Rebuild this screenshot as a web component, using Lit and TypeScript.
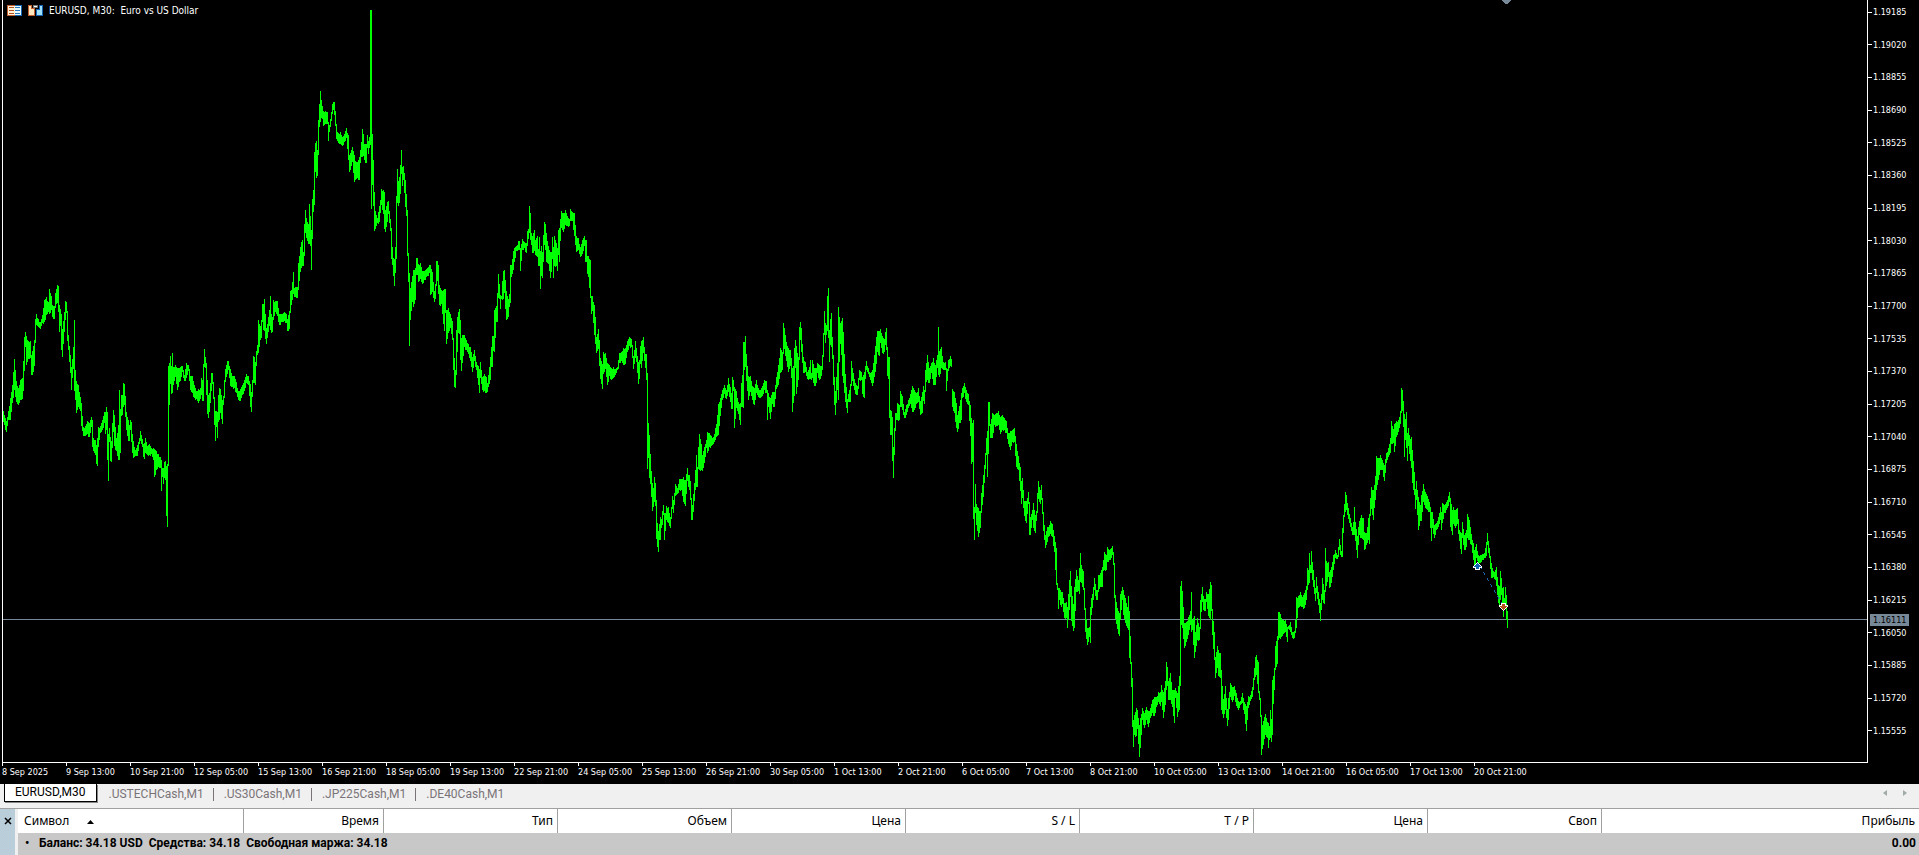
import { LitElement, html, css } from "lit";
import { customElement, state } from "lit/decorators.js";

// Bars of the plot: "x top bottom", one unit per column of the canvas.
const SERIES = `
3 411 422,6 421 432,8 411 420,10 398 420,12 385 403,14 359 390,16 381 402,18 388 405,20 380 400,22 378 399,23 361 391,24 337 371,25 332 347,26 336 365,28 341 359,30 341 358,31 355 375,32 351 375,34 340 366,35 319 343,36 314 325,38 319 327,40 322 329,42 315 323,44 300 322,46 297 315,48 302 312,49 289 314,51 296 310,52 305 317,54 306 319,55 293 305,57 285 303,58 286 312,59 305 332,60 309 326,61 314 350,62 329 357,63 321 344,65 301 320,66 302 313,67 314 341,68 335 350,70 355 373,71 367 390,72 359 378,73 347 369,74 320 391,75 370 400,76 381 413,78 385 407,80 397 411,81 403 426,83 427 436,85 426 436,87 421 434,89 423 437,91 417 427,92 420 447,93 438 451,95 440 455,96 445 464,97 438 466,98 427 447,100 426 433,102 420 430,104 412 423,105 412 434,106 407 430,107 412 460,108 434 481,109 428 442,110 437 461,111 441 462,112 423 448,113 410 432,114 415 446,116 438 451,118 425 460,119 390 460,120 409 453,121 395 416,122 395 415,123 383 407,124 384 405,125 396 417,126 412 430,128 420 441,129 425 441,130 420 430,131 422 442,132 434 453,133 441 458,135 450 456,137 445 456,139 438 444,140 431 441,142 439 447,143 444 457,144 443 459,145 438 453,147 446 455,149 444 455,151 448 454,153 448 460,154 449 477,156 451 470,158 454 467,160 457 468,161 460 491,162 468 477,163 468 484,164 462 478,165 461 480,166 466 516,167 464 527,168 366 465,169 363 405,170 356 384,171 366 394,172 353 393,173 367 385,175 365 377,177 368 390,179 368 382,181 366 377,182 366 372,184 375 381,186 363 378,188 365 371,190 376 390,192 376 393,194 385 398,196 391 399,198 389 403,200 388 399,201 378 395,202 380 401,203 364 401,204 349 367,205 357 368,206 363 395,207 380 414,208 395 418,209 393 412,211 373 391,212 373 384,213 387 399,214 398 425,215 411 441,216 411 427,217 412 438,218 395 422,219 388 420,220 389 413,222 400 424,223 396 405,224 380 397,225 369 380,227 361 374,228 361 370,230 369 386,232 376 387,234 376 388,236 382 393,238 391 400,240 389 401,242 385 395,244 380 391,246 374 383,248 376 385,250 384 407,251 392 412,252 380 397,253 356 383,254 357 383,255 362 385,256 351 366,257 345 355,258 320 353,260 326 340,261 320 338,262 304 319,263 304 330,264 299 331,266 328 344,268 317 332,269 310 326,270 296 330,271 314 333,272 317 332,273 300 320,275 301 312,277 301 316,279 314 325,281 314 322,284 312 321,286 314 323,287 319 331,289 311 329,290 291 310,291 290 305,293 272 294,294 288 297,295 287 297,297 287 298,298 263 290,300 247 272,301 242 268,302 240 266,303 252 266,304 224 256,305 210 233,306 218 238,308 224 244,309 204 244,310 216 246,311 230 270,312 199 239,313 190 212,314 152 205,315 143 172,316 141 178,317 150 176,318 120 155,319 104 127,320 91 122,321 100 118,322 106 119,323 111 126,325 111 124,327 112 124,328 128 141,330 119 123,332 104 114,333 102 110,334 102 115,335 111 126,336 128 139,338 133 143,340 132 144,342 137 146,344 134 142,346 128 138,348 135 160,349 155 172,351 150 166,352 147 162,354 155 182,355 161 180,357 162 178,359 157 180,360 150 163,361 142 157,362 129 157,363 134 156,364 144 160,366 144 163,367 135 148,368 141 154,369 137 148,370 10 145,371 10 209,372 134 185,373 160 206,374 192 231,375 211 229,377 218 223,379 206 222,380 200 213,381 189 205,383 190 214,384 192 229,385 210 232,387 202 222,388 201 214,390 219 231,391 228 259,392 247 265,393 258 276,394 259 286,395 247 273,396 196 259,397 169 203,398 181 206,399 177 203,400 165 194,401 150 174,402 167 186,403 166 180,404 173 193,405 180 207,406 194 216,407 210 256,408 253 282,409 273 346,410 288 320,412 276 302,413 270 307,415 268 300,416 258 275,417 258 275,418 264 282,420 263 279,422 271 284,424 271 280,427 268 276,429 265 273,430 265 295,432 272 292,434 291 302,435 284 299,436 261 286,437 261 281,438 265 294,439 285 305,441 290 304,442 291 314,444 289 331,445 289 313,446 310 344,448 308 333,450 314 328,452 321 340,453 340 370,454 358 387,455 370 388,456 330 375,457 317 352,458 312 333,459 309 334,460 320 360,461 338 371,462 335 363,464 335 347,466 340 350,468 344 354,470 347 361,472 357 372,474 350 361,476 362 370,478 366 385,479 369 393,480 362 378,482 377 390,484 374 391,486 377 393,487 383 392,488 375 387,490 357 380,491 347 367,492 336 367,493 336 351,494 310 352,496 306 322,497 293 322,498 274 298,499 284 299,500 295 309,501 296 299,502 281 300,503 271 299,504 270 293,505 280 309,506 291 320,508 299 317,509 294 307,510 265 303,511 265 277,513 251 270,514 248 262,516 246 251,518 241 250,519 241 250,520 249 271,522 239 250,524 242 248,526 243 253,527 231 246,528 229 239,529 206 233,530 213 240,531 233 245,532 236 253,534 230 251,535 240 255,537 236 257,538 249 266,539 237 266,540 251 289,541 246 276,542 252 278,543 235 262,544 222 245,545 224 250,546 233 262,548 246 264,550 252 278,551 252 272,552 237 259,553 247 278,554 236 266,556 243 266,557 248 271,558 230 255,559 228 262,560 219 241,561 211 228,563 213 232,565 210 225,567 216 226,569 219 226,570 209 221,572 212 221,574 213 236,576 236 252,578 238 250,580 247 257,582 240 254,584 236 246,585 240 262,586 240 262,587 256 274,588 256 277,590 260 298,591 298 314,592 296 311,593 302 323,594 305 335,595 317 344,596 337 353,598 329 349,599 340 366,600 358 379,602 364 389,603 352 374,605 353 369,607 363 385,609 365 376,611 368 380,613 367 378,615 369 375,617 367 370,619 353 363,621 352 361,623 348 365,625 348 364,627 341 352,629 337 346,631 339 347,633 356 369,635 341 358,636 348 362,638 362 384,639 360 379,640 346 364,641 341 368,643 337 353,645 354 368,646 354 380,647 373 469,648 423 458,649 435 478,650 454 484,651 471 497,652 483 511,653 488 507,654 477 502,655 483 506,656 500 539,657 523 547,658 531 552,659 524 540,660 517 540,661 519 528,662 511 525,663 505 515,664 520 540,666 506 520,668 507 523,670 517 528,672 496 506,673 500 513,675 484 496,677 488 494,679 479 490,681 479 490,683 477 502,685 480 506,687 468 481,688 475 487,689 475 490,690 481 500,691 505 520,692 505 520,694 483 501,695 470 490,696 455 487,697 467 487,698 447 469,699 434 470,701 444 470,702 455 471,704 447 463,706 440 448,707 432 453,709 433 447,711 436 446,713 437 444,716 424 437,718 404 435,720 398 416,722 390 400,724 385 394,726 390 399,728 378 392,730 387 402,731 393 409,732 377 409,733 380 391,734 387 428,736 391 408,738 402 414,740 403 425,741 383 407,742 375 407,743 342 408,744 342 370,745 336 367,746 354 381,748 376 400,750 376 392,752 386 400,754 388 405,756 380 393,758 388 397,760 390 398,762 386 396,764 380 390,766 381 393,767 390 420,768 393 407,770 398 419,772 392 404,774 392 407,776 377 389,778 365 385,780 348 373,782 352 370,783 323 350,784 328 349,786 342 361,788 348 372,790 350 366,791 358 378,792 368 412,793 366 403,794 348 396,795 340 368,796 346 394,798 357 380,799 327 360,800 322 340,801 328 352,803 357 373,805 362 372,807 372 379,809 367 379,810 360 379,811 373 380,812 360 378,814 368 386,816 368 383,817 363 373,819 365 380,821 366 376,822 355 370,824 311 332,825 323 343,826 325 335,827 296 331,828 288 338,829 330 362,830 319 345,831 313 347,832 337 359,833 355 385,834 377 405,835 391 415,837 363 390,838 307 400,839 317 362,840 323 344,841 321 355,842 318 376,843 332 383,845 374 402,847 399 413,848 394 402,850 384 402,851 361 376,853 373 386,855 383 394,857 386 395,859 370 380,861 372 380,862 377 394,864 372 398,865 366 379,866 361 370,868 368 374,870 373 380,872 370 386,874 355 377,876 337 364,877 331 352,879 331 356,880 329 343,882 336 353,884 339 352,885 332 345,886 328 350,887 347 376,888 357 379,889 357 418,890 410 435,891 411 435,892 417 461,893 447 478,894 428 455,895 413 431,896 413 420,897 403 420,899 405 420,900 391 403,902 396 410,904 412 418,906 405 415,908 400 408,910 394 404,912 386 412,914 390 410,916 393 404,918 388 402,920 401 415,922 392 413,923 386 401,924 390 404,925 370 383,927 355 380,929 368 383,931 363 373,933 358 385,935 365 385,936 360 377,937 355 368,938 327 375,939 351 377,941 347 368,943 362 370,945 362 370,946 375 391,948 360 370,950 356 366,951 359 367,952 389 407,954 392 413,956 403 428,957 415 432,959 406 423,961 393 420,962 388 398,964 383 393,966 390 402,968 394 405,970 405 436,971 418 464,972 423 462,973 420 519,974 507 540,975 484 513,976 504 525,978 508 537,980 511 528,981 493 512,983 475 497,985 453 469,986 438 453,987 431 477,988 402 454,989 402 426,990 425 438,992 413 438,994 415 425,996 413 426,998 411 425,1000 417 434,1002 415 430,1004 418 430,1006 421 433,1008 433 444,1010 431 450,1012 430 442,1014 428 442,1016 444 467,1018 456 470,1020 467 491,1021 481 504,1022 478 498,1024 501 516,1026 501 523,1028 492 504,1029 517 535,1030 517 535,1032 510 520,1033 503 528,1035 515 533,1036 511 521,1037 493 505,1038 481 499,1040 490 504,1041 485 500,1042 507 514,1043 513 531,1045 535 548,1047 527 542,1048 527 537,1050 521 534,1052 524 537,1054 536 552,1056 548 585,1057 585 590,1058 588 609,1059 588 600,1061 592 607,1062 592 604,1064 603 618,1066 602 618,1067 607 628,1069 580 610,1070 571 597,1071 586 621,1073 604 631,1074 587 628,1076 570 592,1078 580 591,1079 568 594,1080 553 582,1081 565 583,1083 571 590,1084 598 610,1085 610 632,1087 628 645,1089 627 637,1090 607 643,1091 598 615,1093 587 600,1094 578 590,1096 590 600,1097 590 600,1098 575 590,1100 573 587,1102 567 587,1103 560 571,1104 552 570,1106 555 570,1107 547 562,1109 550 560,1111 548 558,1112 546 555,1113 552 565,1114 565 598,1115 595 619,1117 608 629,1119 613 636,1120 594 620,1122 587 600,1123 590 615,1125 598 623,1127 607 628,1128 596 630,1129 611 658,1130 636 664,1131 664 687,1132 678 727,1133 720 747,1134 715 735,1136 708 736,1137 710 729,1139 725 757,1140 718 748,1141 714 735,1142 708 720,1144 713 728,1146 707 720,1148 711 727,1150 708 718,1152 700 713,1154 697 716,1156 697 707,1158 692 702,1160 692 706,1161 685 702,1163 692 718,1165 681 705,1166 662 690,1167 667 686,1168 681 700,1170 673 700,1172 690 707,1174 690 723,1175 688 698,1177 693 717,1178 686 712,1179 676 710,1180 586 686,1181 581 625,1182 591 628,1184 623 648,1186 622 642,1188 617 635,1190 611 625,1191 592 632,1192 620 630,1194 616 658,1195 632 652,1197 618 640,1199 627 640,1200 600 622,1202 587 602,1203 596 610,1205 599 611,1206 592 602,1208 594 616,1210 582 620,1211 585 611,1212 610 635,1214 632 660,1215 657 678,1217 646 668,1218 650 676,1220 653 678,1221 670 710,1223 699 718,1225 686 710,1227 709 726,1228 698 720,1230 683 697,1232 687 702,1234 686 696,1236 693 706,1238 701 710,1240 701 705,1242 693 703,1244 702 714,1246 706 731,1248 696 708,1250 695 701,1252 687 697,1254 668 680,1255 657 677,1256 655 675,1258 662 693,1259 691 700,1260 700 717,1261 715 755,1262 725 749,1264 717 739,1265 714 735,1267 722 738,1268 723 748,1269 726 740,1270 710 738,1271 719 742,1272 680 735,1273 676 704,1274 668 690,1275 646 670,1277 636 664,1278 612 640,1279 612 638,1280 614 639,1281 618 637,1283 620 634,1285 620 632,1287 627 642,1288 626 628,1290 622 632,1292 632 638,1294 631 638,1295 620 632,1296 597 628,1298 596 608,1300 592 606,1302 597 607,1304 593 608,1306 586 600,1307 568 590,1308 570 585,1309 553 583,1310 565 573,1311 551 573,1313 570 587,1315 588 601,1316 577 593,1318 592 605,1320 603 621,1321 594 610,1322 578 600,1324 590 604,1325 548 575,1326 561 586,1328 562 577,1329 572 588,1331 567 583,1333 555 570,1335 550 558,1337 555 559,1339 539 550,1341 551 557,1342 528 557,1343 515 533,1344 504 515,1345 492 512,1346 495 510,1348 508 519,1350 518 527,1352 527 535,1353 522 535,1354 507 535,1355 522 541,1357 536 558,1358 527 545,1359 521 535,1361 515 538,1363 518 540,1364 532 550,1366 533 545,1368 518 540,1369 514 544,1370 498 512,1371 487 509,1373 490 520,1374 485 508,1375 476 500,1376 456 490,1378 458 480,1380 455 470,1382 460 470,1384 465 481,1386 453 463,1388 448 457,1390 438 453,1391 421 444,1393 429 443,1394 424 452,1396 421 437,1398 420 432,1400 411 424,1401 388 412,1402 390 411,1403 401 427,1404 414 457,1405 419 440,1406 412 448,1407 433 461,1408 428 446,1410 439 461,1411 437 468,1412 450 483,1414 472 495,1415 489 509,1416 481 500,1418 497 530,1420 505 521,1421 495 521,1423 484 502,1425 492 508,1427 496 510,1429 502 512,1431 512 541,1432 512 528,1434 525 538,1436 523 530,1438 517 527,1440 507 520,1441 512 530,1442 503 523,1444 505 513,1446 502 510,1448 496 506,1449 492 502,1450 498 527,1452 510 535,1453 507 524,1455 510 528,1457 508 524,1459 530 541,1461 533 554,1462 522 538,1464 535 550,1466 530 547,1467 514 538,1469 520 540,1471 534 545,1473 543 560,1474 550 567,1476 544 558,1478 555 563,1480 555 563,1482 554 560,1484 553 558,1486 542 556,1487 533 545,1489 548 558,1491 563 578,1493 571 577,1495 570 580,1496 567 586,1498 585 603,1499 586 605,1500 571 600,1501 578 595,1502 588 610,1503 587 617,1504 598 607,1505 587 609,1506 595 620,1507 611 628`;

type Bar = [number, number, number];

const keyed: Bar[] = SERIES.trim()
  .split(",")
  .map((s) => s.trim().split(" ").map(Number) as Bar);

// The market was closed before this column, so its bar stands apart.
const SESSION_GAP = 952;

// Fills the columns between keyed bars and lets every bar meet the one before it.
function buildPath(bars: Bar[]): string {
  const all: Bar[] = [];
  bars.forEach(([x, top, bottom], i) => {
    all.push([x, top, bottom]);
    const next = bars[i + 1];
    if (!next) return;
    for (let c = x + 1; c < next[0]; c++) {
      const t = (c - x) / (next[0] - x);
      const wick = (c * 7) % 5;
      const hi = Math.round(top + (next[1] - top) * t) + (wick > 2 ? 1 : 0);
      const lo = Math.round(bottom + (next[2] - bottom) * t) + (wick < 2 ? 1 : 0);
      all.push([c, Math.min(hi, lo - 5), lo]);
    }
  });
  return all
    .map(([x, top, bottom], i) => {
      const prev = all[i - 1];
      if (prev && x !== SESSION_GAP) {
        top = Math.min(top, prev[2] - 2);
        bottom = Math.max(bottom, prev[1] + 2);
      }
      return `M${x + 0.5} ${top}V${bottom}`;
    })
    .join("");
}

const PATH = buildPath(keyed);

const PRICES = Array.from({ length: 23 }, (_, i) => (1.19185 - i * 0.00165).toFixed(5));

const TIMES = [
  "8 Sep 2025", "9 Sep 13:00", "10 Sep 21:00", "12 Sep 05:00", "15 Sep 13:00", "16 Sep 21:00",
  "18 Sep 05:00", "19 Sep 13:00", "22 Sep 21:00", "24 Sep 05:00", "25 Sep 13:00", "26 Sep 21:00",
  "30 Sep 05:00", "1 Oct 13:00", "2 Oct 21:00", "6 Oct 05:00", "7 Oct 13:00", "8 Oct 21:00",
  "10 Oct 05:00", "13 Oct 13:00", "14 Oct 21:00", "16 Oct 05:00", "17 Oct 13:00", "20 Oct 21:00",
];

@customElement("price-chart")
export class PriceChart extends LitElement {
  static styles = css`
    :host {
      display: grid;
      grid-template-columns: minmax(0, 1fr) 51px;
      grid-template-rows: minmax(0, 1fr) 21px;
      padding-left: 2px;
      background: #000;
      color: #fff;
      font: 9px/12px "DejaVu Sans Condensed", "DejaVu Sans", sans-serif;
      font-stretch: condensed;
    }
    .plot {
      position: relative;
      border: solid #fff;
      border-width: 0 1px 1px;
      min-height: 0;
    }
    .canvas {
      display: block;
      width: 100%;
      height: 100%;
    }
    .title {
      position: absolute;
      top: 4px;
      left: 4px;
      display: flex;
      align-items: center;
      gap: 6px;
      height: 13px;
      font-size: 10px;
    }
    .name {
      white-space: pre;
    }
    .tool {
      display: block;
      width: 15px;
      height: 11px;
      padding: 0;
      border: 0;
      background: none;
    }
    .tool svg {
      display: block;
    }
    .prices {
      position: relative;
      display: flex;
      flex-direction: column;
      justify-content: space-between;
      padding: 6px 0 26px;
    }
    .price {
      display: flex;
      align-items: center;
      gap: 1px;
      height: 12px;
    }
    .price::before {
      content: "";
      width: 4px;
      height: 1px;
      background: #fff;
    }
    .current {
      position: absolute;
      top: 81.3%;
      left: 2px;
      width: 39px;
      height: 12px;
      margin-top: -6px;
      text-indent: 3px;
      background: #778899;
      color: #000;
    }
    .times {
      display: flex;
      grid-column: 1 / -1;
      overflow: hidden;
    }
    .time {
      flex: 0 0 64px;
      white-space: nowrap;
    }
    .time::before {
      content: "";
      display: block;
      width: 1px;
      height: 3px;
      background: #fff;
    }
  `;

  render() {
    return html`
      <div class="plot">
        <svg class="canvas" viewBox="3 0 1864 762" preserveAspectRatio="none" shape-rendering="crispEdges">
          <path d="M3 619.5H1867" stroke="#778899" />
          <path d=${PATH} stroke="#00ff00" fill="none" />
          <path d="M1502 0h9v1h-1v1h-1v1h-1v1h-3v-1h-1v-1h-1v-1h-1z" fill="#778899" />
          <path d="M1480 566L1502 604" stroke="#1c62a8" stroke-dasharray="3 4" fill="none" />
          <path d="M1477 562h1v1h1v1h1v1h1v1h1v2h-2v2h-5v-2h-2v-2h1v-1h1v-1h1v-1h1z" fill="#fff" />
          <path d="M1477 563h1v1h1v1h1v1h1v1h-2v2h-3v-2h-2v-1h1v-1h1v-1h1z" fill="#1464b4" />
          <path d="M1501 603h5v2h2v2h-1v1h-1v1h-1v1h-1v1h-1v-1h-1v-1h-1v-1h-1v-1h-1v-2h2z" fill="#fff" />
          <path d="M1502 604h3v2h2v1h-1v1h-1v1h-1v1h-1v-1h-1v-1h-1v-1h-1v-1h2z" fill="#b4501e" />
        </svg>
        <div class="title">
          <button class="tool" aria-label="One-click trading">
            <svg width="15" height="11" shape-rendering="crispEdges">
              <path d="M0 0h8v11H0z" fill="#c06030" /><path d="M8 0h7v11H8z" fill="#1464b4" />
              <path d="M1 1h7v9H1z" fill="#fff0d8" /><path d="M8 1h6v9H8z" fill="#e8f8ff" />
              <path d="M2 2.5h5M2 5.5h5M2 8.5h5" stroke="#b4501e" />
              <path d="M8 2.5h5M8 5.5h5M8 8.5h5" stroke="#2878c0" />
            </svg>
          </button>
          <button class="tool" aria-label="Depth of market">
            <svg width="15" height="11" shape-rendering="crispEdges">
              <path d="M0 0h4v3h3v8H0z" fill="#c06030" /><path d="M1 1h2v3h3v6H1z" fill="#ffe8c0" />
              <path d="M11 0h4v11H8V4h3z" fill="#1464b4" /><path d="M12 1h2v9H9V5h3z" fill="#a0e0f8" />
              <path d="M5 0h5v3H5z" fill="#777" /><path d="M6 1h3v1H6z" fill="#fff" />
            </svg>
          </button>
          <span class="name">EURUSD, M30:  Euro vs US Dollar</span>
        </div>
      </div>
      <div class="prices">
        ${PRICES.map((p) => html`<span class="price">${p}</span>`)}
        <span class="current">1.16111</span>
      </div>
      <div class="times">${TIMES.map((t) => html`<span class="time">${t}</span>`)}</div>
    `;
  }
}

const COLUMNS = ["Время", "Тип", "Объем", "Цена", "S / L", "T / P", "Цена", "Своп", "Прибыль"];

@customElement("trade-panel")
export class TradePanel extends LitElement {
  static styles = css`
    :host {
      display: flex;
      border-top: 1px solid #a0a0a0;
      background: #f0f0f0;
      color: #000;
      font: 12px/16px "Noto Sans", "Open Sans", sans-serif;
    }
    .side {
      flex: 0 0 15px;
      margin-right: 3px;
      background: repeating-conic-gradient(#b4cfe0 0 25%, #c0ccd4 0 50%) 0 0 / 2px 2px;
    }
    .close {
      display: block;
      width: 15px;
      height: 22px;
      padding: 0;
      border: 0;
      background: none;
    }
    .close svg,
    .sort {
      display: inline-block;
      vertical-align: middle;
    }
    .sort {
      margin-left: 18px;
    }
    .grid {
      flex: 1;
      min-width: 0;
      table-layout: fixed;
      border-collapse: separate;
      border-spacing: 0;
      background: #fff;
    }
    .first {
      width: 226px;
    }
    .second {
      width: 140px;
    }
    .regular {
      width: 174px;
    }
    .head {
      box-sizing: border-box;
      height: 24px;
      padding: 0 4px;
      border-right: 1px solid #a0a0a0;
      font-weight: 400;
      text-align: right;
    }
    .head:first-child {
      padding-left: 6px;
      text-align: left;
    }
    .head:last-child {
      border-right: 0;
    }
    .cell {
      box-sizing: border-box;
      height: 22px;
      padding: 0 3px 2px 7px;
      background: #c8c8c8;
      font-family: Roboto, "Noto Sans", sans-serif;
      font-weight: 700;
      white-space: pre;
    }
    .profit {
      text-align: right;
    }
    .dot {
      display: inline-block;
      width: 14px;
    }
  `;

  render() {
    return html`
      <div class="side">
        <button class="close" aria-label="Закрыть">
          <svg width="8" height="8"><path d="M1 1L7 7M7 1L1 7" stroke="#000" stroke-width="1.5" /></svg>
        </button>
      </div>
      <table class="grid">
        <colgroup>
          <col class="first" /><col class="second" />
          ${COLUMNS.slice(2).map(() => html`<col class="regular" />`)}
          <col />
        </colgroup>
        <thead>
          <tr>
            <th class="head" scope="col">
              Символ<svg class="sort" width="7" height="4"><path d="M0 4L3.500 0L7 4z" /></svg>
            </th>
            ${COLUMNS.map((c) => html`<th class="head" scope="col">${c}</th>`)}
          </tr>
        </thead>
        <tbody>
          <tr>
            <td class="cell" colspan="9"><span class="dot">•</span>Баланс: 34.18 USD  Средства: 34.18  Свободная маржа: 34.18</td>
            <td class="cell profit">0.00</td>
          </tr>
        </tbody>
      </table>
    `;
  }
}

const TABS = ["EURUSD,M30", ".USTECHCash,M1", ".US30Cash,M1", ".JP225Cash,M1", ".DE40Cash,M1"];

@customElement("app-root")
export class AppRoot extends LitElement {
  static styles = css`
    :host {
      display: flex;
      flex-direction: column;
      height: 100vh;
      overflow: hidden;
      background: #f0f0f0;
    }
    .chart {
      flex: 1;
      min-height: 0;
    }
    .tabs {
      display: flex;
      align-items: flex-start;
      height: 24px;
      padding: 0 4px;
      background: #f0f0f0;
    }
    .tab {
      position: relative;
      height: 20px;
      padding: 0 10px;
      border: 0;
      background: none;
      color: #7a7478;
      font: 12px/19px Roboto, "Noto Sans", sans-serif;
    }
    .tab.rule::after {
      content: "";
      position: absolute;
      top: 4px;
      right: 0;
      width: 1px;
      height: 13px;
      background: #7a7478;
    }
    .tab.active {
      height: 18px;
      margin-right: 2px;
      border: solid #000;
      border-width: 0 1px 1px;
      background: #fff;
      color: #000;
      box-shadow: 1px 1px 0 #888;
      line-height: 17px;
    }
    .scroll {
      width: 20px;
      height: 18px;
      padding: 0;
      border: 0;
      background: none;
    }
    .spacer {
      flex: 1;
    }
    .arrow {
      display: block;
      margin: 0 auto;
    }
  `;

  @state() private active = 0;

  render() {
    return html`
      <price-chart class="chart"></price-chart>
      <nav class="tabs">
        ${TABS.map(
          (t, i) => html`<button
            class="tab ${i === this.active ? "active" : i < TABS.length - 1 ? "rule" : ""}"
            @click=${() => (this.active = i)}
          >${t}</button>`
        )}
        <span class="spacer"></span>
        <button class="scroll" aria-label="Назад">
          <svg class="arrow" width="4" height="6"><path d="M4 0V6L0 3z" fill="#a0aaa6" /></svg>
        </button>
        <button class="scroll" aria-label="Вперёд">
          <svg class="arrow" width="4" height="6"><path d="M0 0V6L4 3z" fill="#a0aaa6" /></svg>
        </button>
      </nav>
      <trade-panel></trade-panel>
    `;
  }
}
